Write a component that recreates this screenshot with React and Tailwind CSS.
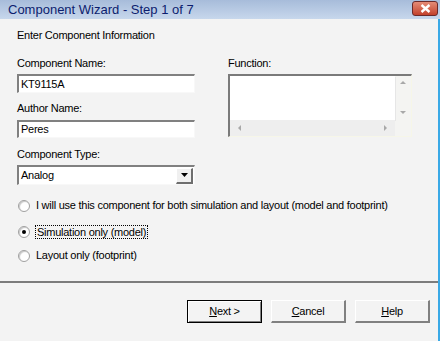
import React from "react";

const font = { fontFamily: '"Liberation Sans", Arial, sans-serif' };

function Sunken({ className = "", children }) {
  return (
    <div className={"border-t-2 border-l-2 border-t-[#808080] border-l-[#808080] border-b border-r border-b-[#f8f8f8] border-r-[#f8f8f8] bg-white " + className}>
      {children}
    </div>
  );
}

function Radio({ checked, children, focus }) {
  return (
    <div className="flex items-center h-[13px]">
      <span className="w-[12px] h-[12px] rounded-full bg-white border border-[#a0a0a0] shadow-[inset_1px_1px_1px_#c8c8c8] flex items-center justify-center ml-[1px]">
        {checked && <span className="w-[4px] h-[4px] rounded-full bg-black" />}
      </span>
      <span className={"ml-[5px] px-[1px] " + (focus ? "border border-dotted border-black leading-[12px]" : "")}>{children}</span>
    </div>
  );
}

function Btn({ children, def }) {
  return (
    <button
      className={
        "w-[75px] h-[23px] text-[11px] bg-[#f3f3f3] flex items-center justify-center " +
        (def
          ? "border border-black shadow-[inset_1px_1px_0_#fff,inset_-1px_-1px_0_#808080]"
          : "border-t border-l border-t-white border-l-white border-b-2 border-r-2 border-b-[#808080] border-r-[#808080]")
      }
    >
      {children}
    </button>
  );
}

function Arrow({ dir }) {
  const pts = {
    up: "1,5 4,2 7,5",
    down: "1,2 4,5 7,2",
    left: "5,1 2,4 5,7",
    right: "3,1 6,4 3,7",
  }[dir];
  return (
    <svg width="8" height="8" viewBox="0 0 8 8">
      <polygon points={pts} fill="#a8a8a8" />
    </svg>
  );
}

export default function App() {
  return (
    <div className="w-[440px] h-[341px] flex flex-col bg-[#f3f3f3] text-black text-[11px] leading-[13px] tracking-[-0.25px]" style={font}>
      <div className="h-[19px] shrink-0 flex items-center justify-between bg-gradient-to-b from-[#a7bcda] to-[#c7d7ec] pl-[8px] pr-[2px]">
        <span className="text-[13px] text-[#0c1d6e] tracking-[0px]">Component Wizard - Step 1 of 7</span>
        <span className="w-[26px] h-[15px] -mt-[2px] rounded-[3px] border border-[#6b2a2a] bg-gradient-to-b from-[#e58b76] to-[#c2402b] flex items-center justify-center">
          <svg width="11" height="9" viewBox="0 0 11 9">
            <path d="M1.5 1 L9.5 8 M9.5 1 L1.5 8" stroke="#fff" strokeWidth="2.4" />
          </svg>
        </span>
      </div>
      <div className="flex-1 flex flex-col border-r-2 border-r-[#3aa9e6]">
        <div className="pl-[17px] pt-[10px]">Enter Component Information</div>
        <div className="flex pl-[17px] mt-[15px]">
          <div className="w-[178px] flex flex-col">
            <div>Component Name:</div>
            <Sunken className="mt-[4px] h-[19px] pl-[2px] flex items-center">KT9115A</Sunken>
            <div className="mt-[9px]">Author Name:</div>
            <Sunken className="mt-[5px] h-[18px] pl-[2px] flex items-center">Peres</Sunken>
            <div className="mt-[10px]">Component Type:</div>
            <Sunken className="mt-[4px] h-[20px] pl-[2px] flex items-center justify-between pr-[1px]">
              <span>Analog</span>
              <span className="w-[17px] h-[16px] bg-[#f0f0f0] border-t border-l border-t-white border-l-white border-b-2 border-r-2 border-b-[#6e6e6e] border-r-[#6e6e6e] flex items-center justify-center">
                <svg width="7" height="4" viewBox="0 0 7 4">
                  <polygon points="0,0 7,0 3.5,4" fill="#000" />
                </svg>
              </span>
            </Sunken>
          </div>
          <div className="ml-[33px] flex flex-col">
            <div>Function:</div>
            <div className="mt-[4px] w-[184px] h-[63px] border-t-2 border-l-2 border-t-[#7a7a7a] border-l-[#7a7a7a] border-b border-r border-b-[#f6f6e8] border-r-[#f6f6e8] bg-[#f4f4f2] grid grid-cols-[1fr_16px] grid-rows-[1fr_16px]">
              <div className="bg-white shadow-[1px_1px_0_#e6e6e6]" />
              <div className="flex flex-col items-center justify-between py-[3px]">
                <Arrow dir="up" />
                <Arrow dir="down" />
              </div>
              <div className="flex items-center justify-between px-[6px] bg-[#eeeeee]">
                <Arrow dir="left" />
                <Arrow dir="right" />
              </div>
              <div />
            </div>
          </div>
        </div>
        <div className="pl-[17px] mt-[14px] flex flex-col">
          <Radio>I will use this component for both simulation and layout (model and footprint)</Radio>
          <div className="mt-[13px]">
            <Radio checked focus>Simulation only (model)</Radio>
          </div>
          <div className="mt-[11px]">
            <Radio>Layout only (footprint)</Radio>
          </div>
        </div>
        <div className="mt-[19px] h-[2px] bg-[#7c7c7c]" />
        <div className="flex justify-end gap-[9px] pr-[8px] pt-[17px]">
          <Btn def><span><u>N</u>ext &gt;</span></Btn>
          <Btn><span><u>C</u>ancel</span></Btn>
          <Btn><span><u>H</u>elp</span></Btn>
        </div>
      </div>
    </div>
  );
}
